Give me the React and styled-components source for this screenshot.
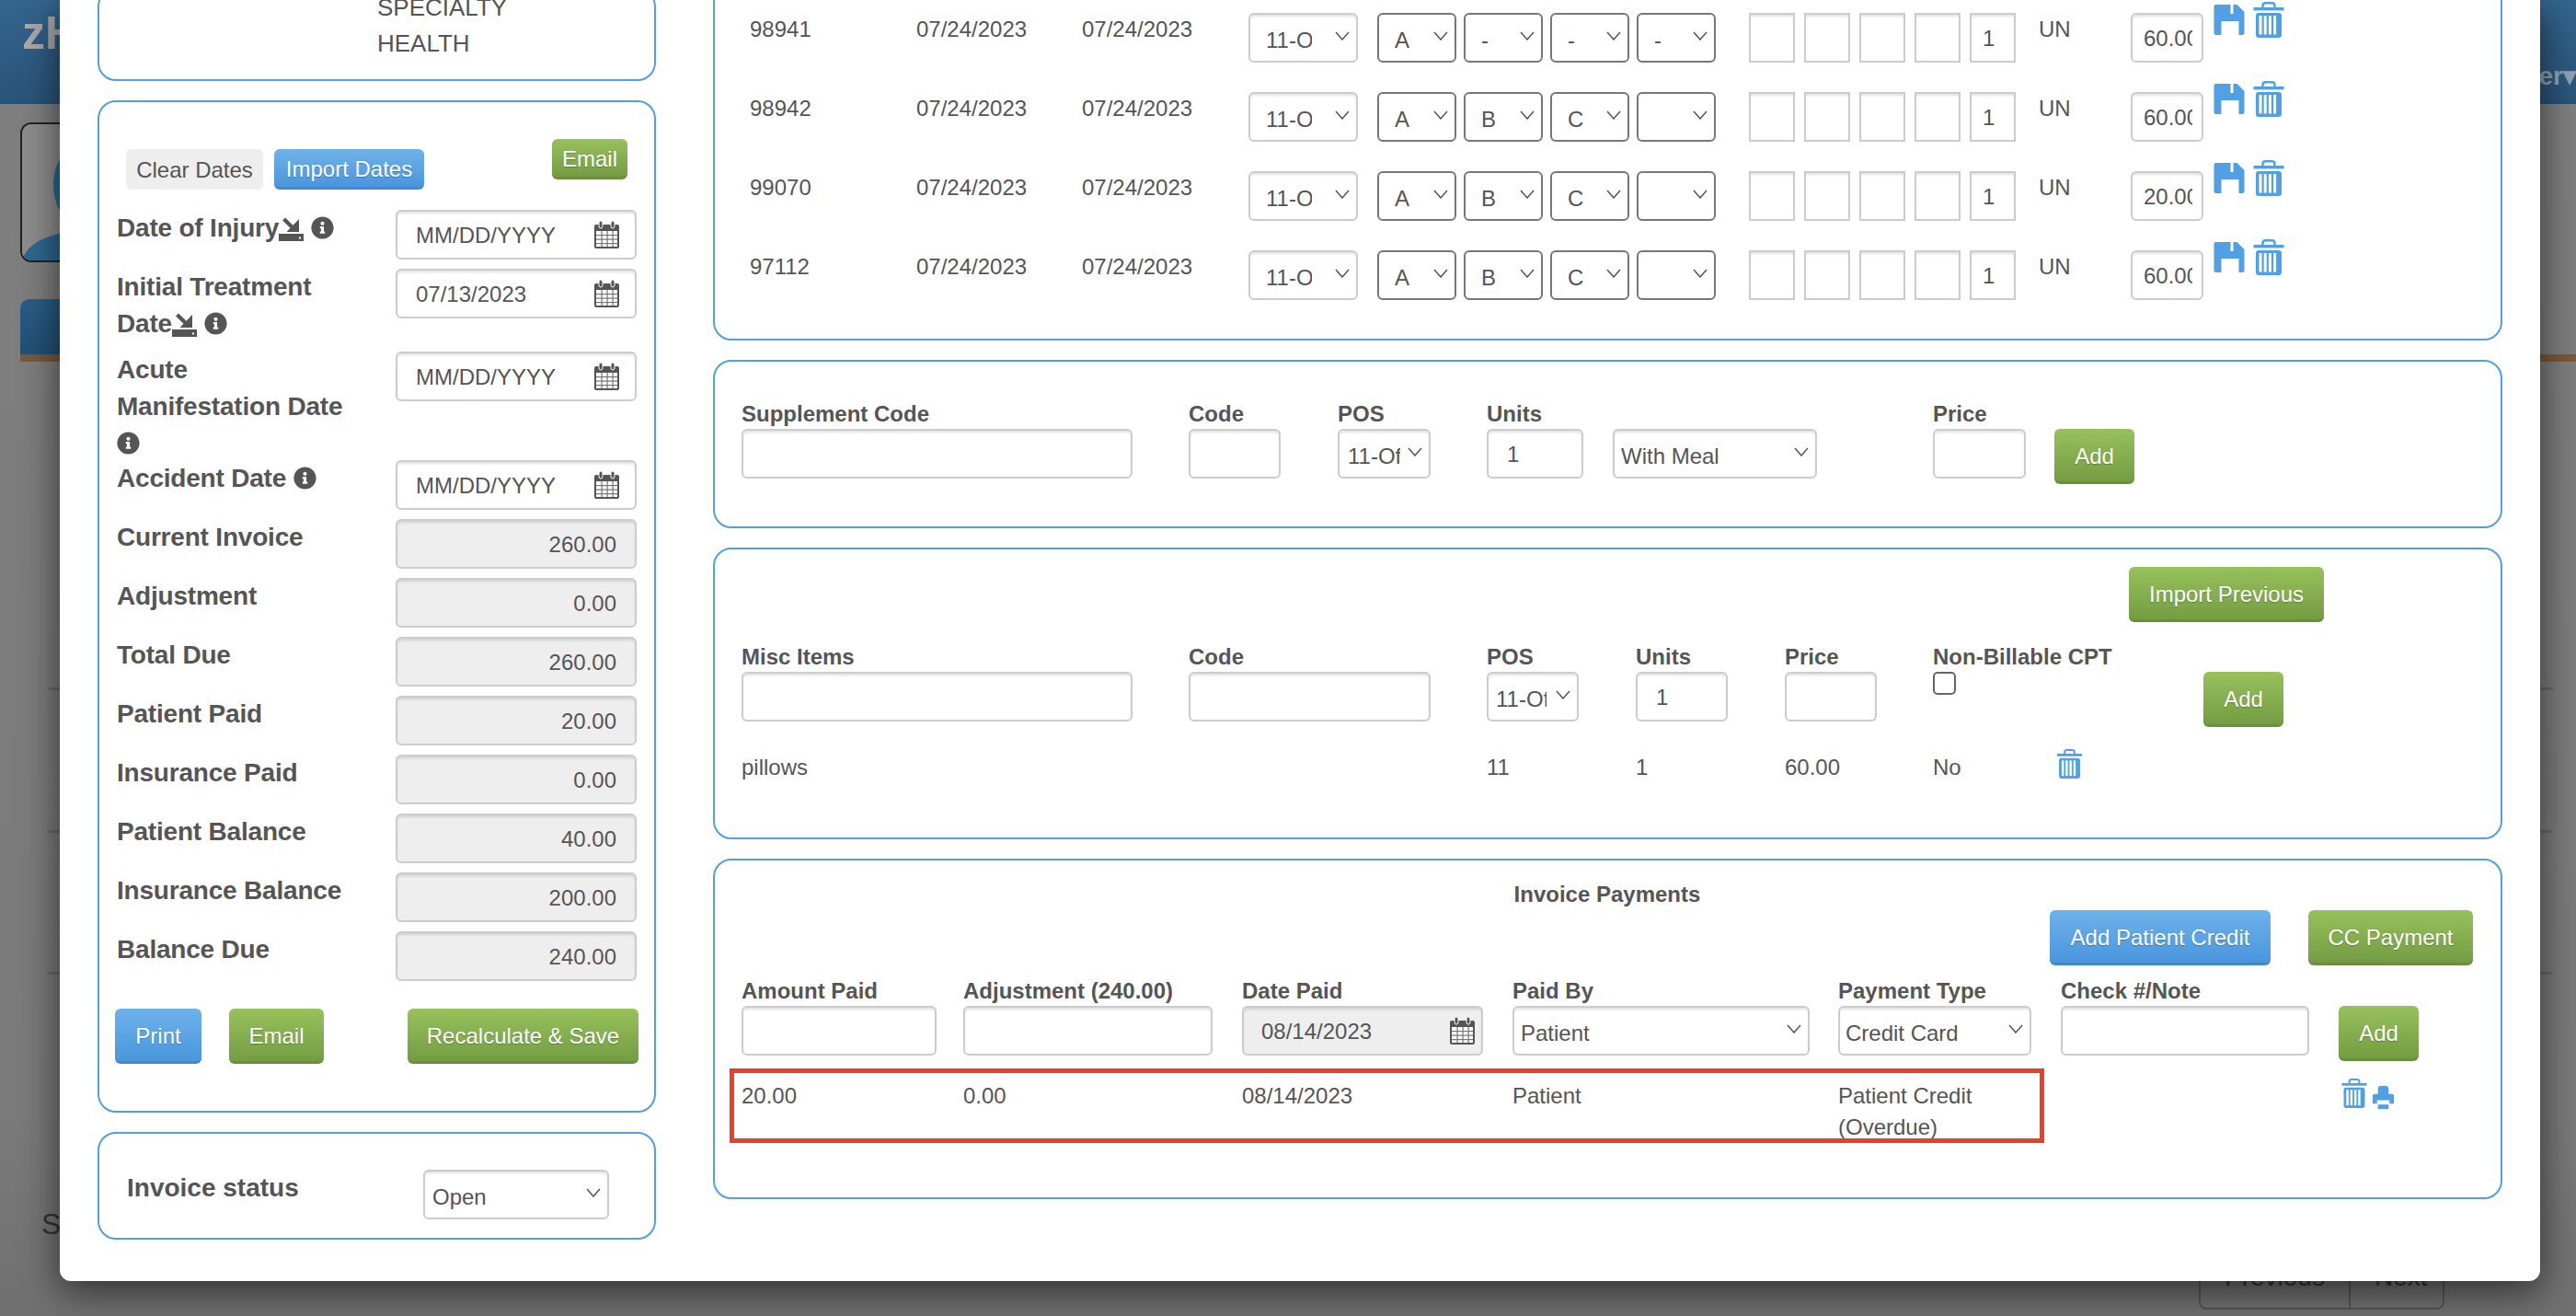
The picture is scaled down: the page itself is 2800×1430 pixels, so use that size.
import React from "react";
import styled, { createGlobalStyle } from "styled-components";
import { FaInfoCircle } from "react-icons/fa";

const Global = createGlobalStyle`
  html, body { margin: 0; padding: 0; background: #7b7b7b; }
  * { box-sizing: border-box; }
  body { font-family: "Liberation Sans", Arial, sans-serif; color: #555; }
`;

const Stage = styled.div`
  position: relative; width: 2800px; height: 1430px; overflow: hidden;
  background: linear-gradient(#7f7f7f, #7a7a7a 85%, #707070);
  display: flex; flex-direction: column;
`;
const TopBar = styled.header`
  height: 113px; flex: none; display: flex; justify-content: space-between;
  background: linear-gradient(#33658f, #2a5479); border-bottom: 2px solid #28506f;
  color: #a9a9a9; font-weight: 700;
`;
const Brand = styled.div`font-size: 50px; line-height: 72px; padding-left: 24px;`;
const UserMenu = styled.div`font-size: 28px; line-height: 166px; color: #8ea2b4;`;
const AvatarBox = styled.div`
  flex: none; width: 200px; height: 152px; margin: 20px 0 0 22px; border: 2px solid #222; border-radius: 12px;
  background: #8b8b8b; overflow: hidden;
`;
const TabBar = styled.div`
  flex: none; margin: 40px 0 0 22px; height: 68px; border-bottom: 8px solid #78593c;
`;
const Tab = styled.div`
  width: 200px; height: 60px; border-radius: 10px 10px 0 0; background: linear-gradient(#2a5d88, #224f73);
`;
const ListRows = styled.div`flex: none; margin: 354px 25px 0 52px;`;
const ListRow = styled.div`height: 154.5px; border-top: 3px solid #6a6a6a;`;
const Footer = styled.footer`
  flex: 1; display: flex; justify-content: space-between; align-items: flex-end;
  padding: 0 143px 7px 45px; color: #333; font-size: 32px;
`;
const ShowingText = styled.div`margin-bottom: 74px;`;
const Pager = styled.nav`
  display: flex; width: 267px; height: 60px; border: 2px solid #555; border-radius: 8px;
  font-size: 28px; line-height: 46px; color: #333;
`;
const PagerItem = styled.span`
  padding: 0 26px; flex: none; white-space: nowrap;
  & + & { border-left: 2px solid #555; }
`;

const Modal = styled.main`
  position: absolute; left: 65px; top: 0; width: 2696px; height: 1392px; background: #fff;
  border-radius: 0 0 12px 12px; box-shadow: 0 10px 40px rgba(0,0,0,.62);
  display: flex; gap: 62px; padding-left: 41px; overflow: hidden;
`;
const Column = styled.div`
  display: flex; flex-direction: column; justify-content: flex-end; gap: 21px; height: 100%;
  width: ${(p) => p.$w}px; flex: none; padding-bottom: ${(p) => p.$pb}px;
`;
const Card = styled.section`
  flex: none; position: relative; border: 2px solid #519fe4; border-radius: 20px; background: #fff;
  padding: ${(p) => p.$pad};
`;
const SpecialtyText = styled.div`font-size: 26px; line-height: 39px;`;

const TopActions = styled.div`display: flex; justify-content: space-between; margin-bottom: 22px; padding: 0 10px;`;
const ButtonGroup = styled.div`display: flex; gap: 12px; margin-top: 11px;`;

const Btn = styled.button`
  display: block; flex: none; font: 24px "Liberation Sans", Arial, sans-serif; color: #fff; border: 0;
  margin: 0 0 0 ${(p) => p.$ml || 0}px;
  border-radius: 6px; white-space: nowrap; padding: 2px 0 0;
  height: ${(p) => p.$h || 60}px; width: ${(p) => p.$w}px;
  text-shadow: 0 1px 1px rgba(0,0,0,.25);
  background: ${(p) => p.$tone === "green"
    ? "linear-gradient(#98c15c, #749c43)"
    : p.$tone === "blue" ? "linear-gradient(#6fb2ea, #4996dd)" : "#eee"};
  border-bottom: ${(p) => p.$tone === "green" ? "3px solid #6b8f3e" : p.$tone === "blue" ? "3px solid #4288cb" : "0"};
  ${(p) => p.$tone === "grey" ? "color:#555;text-shadow:none;" : ""}
`;

const FormRow = styled.div`display: flex; align-items: flex-start; height: ${(p) => p.$h}px;`;
const FormLabel = styled.div`width: 303px; flex: none; padding-right: 33px; font-size: 28px; line-height: 40px; font-weight: 700; letter-spacing: -.2px;`;
const PrintRow = styled.div`display: flex; margin: 20px 0 0 -2px;`;

const Field = styled.input`
  display: block; flex: none; height: ${(p) => p.$h || 54}px; width: ${(p) => p.$w}px; margin: 0;
  border: 2px solid #ccc; border-radius: ${(p) => (p.$square ? 0 : 6)}px;
  box-shadow: inset 0 3px 3px -1px rgba(0,0,0,.12);
  background: ${(p) => (p.$off ? "#eee" : "#fff")};
  font: 24px "Liberation Sans", Arial, sans-serif; color: #555; outline: 0;
  padding: 2px ${(p) => p.$pr ?? 10}px 0 ${(p) => p.$pl ?? 12}px;
  text-align: ${(p) => (p.$right ? "right" : "left")};
  &::placeholder { color: #555; opacity: 1; }
`;
const DateWrap = styled.div`position: relative; width: ${(p) => p.$w}px;`;
const CalSlot = styled.span`position: absolute; right: ${(p) => p.$r}px; top: 12px; display: block; line-height: 0;`;
const SelectWrap = styled.div`position: relative; width: ${(p) => p.$w}px;`;
const Sel = styled.select`
  appearance: none; display: block; width: 100%; height: 54px; margin: 0; background: #fff; outline: 0;
  border: 2px solid ${(p) => (p.$dark ? "#777" : "#ccc")}; border-radius: 6px;
  box-shadow: ${(p) => (p.$dark ? "none" : "inset 0 3px 3px -1px rgba(0,0,0,.12)")};
  font: 24px "Liberation Sans", Arial, sans-serif; color: #555;
  padding: 5px ${(p) => p.$pr || 31}px 0 ${(p) => p.$pl}px;
`;
const ChevSlot = styled.span`position: absolute; right: 9px; top: 20px; line-height: 0; pointer-events: none;`;

const RowGrid = styled.div`
  display: grid; grid-template-columns: ${(p) => p.$cols}; align-items: start;
  row-gap: ${(p) => p.$gap || 0}px; position: relative;
`;
const Cell = styled.div`font-size: 24px; line-height: 34px; color: #555; margin-top: ${(p) => p.$mt || 0}px;`;
const Heading = styled.div`font-size: 24px; line-height: 33px; height: 33px; font-weight: 700; white-space: nowrap; color: #555;`;
const Stack = styled.div`display: flex; flex-direction: column; align-items: flex-start;`;
const IconPair = styled.div`display: flex; align-items: flex-start; gap: ${(p) => p.$gap}px; margin: ${(p) => p.$m};`;
const SaveSlot = styled.span`display: block; margin-top: 3px; line-height: 0;`;
const PrinterSlot = styled.span`display: block; margin-top: 8px; line-height: 0;`;
const ImportRow = styled.div`display: flex; justify-content: flex-end; margin-bottom: 21px; padding-right: 192px;`;
const MiscData = styled(RowGrid)`margin-top: 27px;`;
const Check = styled.input`
  appearance: none; display: block; width: 25px; height: 25px; margin: 0; border: 2px solid #666; border-radius: 5px; background: #fff;
`;
const PaymentTitle = styled.div`font-size: 24px; line-height: 34px; font-weight: 700; text-align: center; color: #555;`;
const PaymentActions = styled.div`display: flex; justify-content: flex-end; gap: 41px; margin-bottom: 11px;`;
const PaymentData = styled(RowGrid)`margin-top: 21px;`;
const RedBox = styled.div`
  position: absolute; left: -13px; top: -13px; width: 1429px; height: 81px; border: 5px solid #e8412a; pointer-events: none;
`;
const StatusRow = styled.div`display: flex; align-items: flex-start;`;
const StatusLabel = styled.div`width: 322px; flex: none; font-size: 28px; line-height: 40px; font-weight: 700;`;
const InlineIcon = styled.span`
  display: inline-block; line-height: 0; vertical-align: ${(p) => p.$va}px; margin-left: ${(p) => p.$ml || 0}px;
`;

const BLUE = "#52a0e4";
const Chevron = () => (
  <svg width="16" height="10" viewBox="0 0 16 10"><polyline points="1,1 8,9 15,1" fill="none" stroke="#555" strokeWidth="1.5" /></svg>
);
const Calendar = ({ w = 27, h = 30 }) => (
  <svg width={w} height={h} viewBox="0 0 27 30">
    <rect x="0" y="4" width="27" height="26" rx="2" fill="#555" />
    <rect x="5" y="0" width="4" height="8" rx="2" fill="#555" stroke="#fff" strokeWidth="1" />
    <rect x="18" y="0" width="4" height="8" rx="2" fill="#555" stroke="#fff" strokeWidth="1" />
    <rect x="2" y="11" width="23" height="17" fill="#fff" />
    {[7.5, 13.5, 19.5].map((x) => <rect key={x} x={x} y="11" width="1.2" height="17" fill="#777" />)}
    {[15, 19.5, 24].map((y) => <rect key={y} x="2" y={y} width="23" height="1.2" fill="#777" />)}
  </svg>
);
const SaveIcon = () => (
  <svg width="34" height="33" viewBox="0 0 33 33">
    <path fillRule="evenodd" fill={BLUE} d="M2 0H18V10H21V0H25L33 8V31Q33 33 31 33H27V18H8V33H2Q0 33 0 31V2Q0 0 2 0Z" />
  </svg>
);
const TrashIcon = ({ w = 34, h = 39 }) => (
  <svg width={w} height={h} viewBox="0 0 33 39">
    <path d="M10 7V4Q10 1.2 13 1.2H20Q23 1.2 23 4V7" fill="none" stroke={BLUE} strokeWidth="2.4" />
    <rect x="0" y="6" width="33" height="3.4" fill={BLUE} />
    <rect x="2.5" y="12" width="28" height="27" rx="3" fill={BLUE} />
    {[6, 11.2, 16.4, 21.6].map((x) => <rect key={x} x={x} y="15" width="3" height="20.5" fill="#fff" />)}
  </svg>
);
const PrinterIcon = () => (
  <svg width="25" height="25" viewBox="0 0 24 26">
    <path fill={BLUE} d="M6 10V3Q6 0 9 0H15Q18 0 18 3V10Z" />
    <path fill={BLUE} d="M2 9H22Q24 9 24 11V20H19V16H5V20H0V11Q0 9 2 9Z" />
    <rect x="6" y="21" width="12" height="5" fill={BLUE} />
  </svg>
);
const ImportIcon = () => (
  <svg width="27" height="28" viewBox="0 0 27 28">
    <path fill="#555" fillRule="evenodd" d="M0 20H27V28H0ZM22 23.500h2v2h-2Z" />
    <path fill="#555" d="M22 4V18H8.500L12.500 13.800L4 5.500L7 2.500L15.500 10.800L22 4Z" />
  </svg>
);
const Info = ({ ml = 8 }) => (
  <InlineIcon $ml={ml} $va={-3}><FaInfoCircle size={25} color="#555" /></InlineIcon>
);
const Imp = () => <InlineIcon $va={-5}><ImportIcon /></InlineIcon>;

const Select = ({ w, pl, pr, dark, value, options }) => (
  <SelectWrap $w={w}>
    <Sel $pl={pl} $pr={pr} $dark={dark} defaultValue={value}>
      {(options || [value]).map((o) => <option key={o}>{o}</option>)}
    </Sel>
    <ChevSlot><Chevron /></ChevSlot>
  </SelectWrap>
);
const DateField = ({ w, value, off, pl = 20, r = 19 }) => (
  <DateWrap $w={w}>
    <Field $w={w} $off={off} $pl={pl} $pr={8} placeholder="MM/DD/YYYY" defaultValue={value} readOnly={off} />
    <CalSlot $r={r}><Calendar /></CalSlot>
  </DateWrap>
);

const treatments = [
  ["98941", ["A", "-", "-", "-"], "60.00"],
  ["98942", ["A", "B", "C", ""], "60.00"],
  ["99070", ["A", "B", "C", ""], "20.00"],
  ["97112", ["A", "B", "C", ""], "60.00"],
];
const balances = [
  ["Current Invoice", "260.00"], ["Adjustment", "0.00"], ["Total Due", "260.00"], ["Patient Paid", "20.00"],
  ["Insurance Paid", "0.00"], ["Patient Balance", "40.00"], ["Insurance Balance", "200.00"], ["Balance Due", "240.00"],
];
const TX_COLS = "181px 180px 181px 140px 94px 94px 94px 122px 60px 60px 60px 60px 75px 100px 90px 90px";
const SUP_COLS = "486px 162px 162px 137px 348px 132px 100px";
const MISC_COLS = "486px 324px 162px 162px 161px 294px 100px";
const PAY_COLS = "241px 303px 294px 354px 242px 302px 120px";

const Avatar = () => (
  <svg width="196" height="148" viewBox="0 0 196 148">
    <rect width="196" height="148" fill="#8d8d8d" />
    <ellipse cx="78" cy="66" rx="44" ry="52" fill="#2f6791" />
    <path d="M0 148Q6 126 44 118L120 118L160 148Z" fill="#2f6791" />
  </svg>
);

export default function App() {
  return (
    <Stage>
      <Global />
      <TopBar>
        <Brand>zHealth</Brand>
        <UserMenu>User▾</UserMenu>
      </TopBar>
      <AvatarBox><Avatar /></AvatarBox>
      <TabBar><Tab /></TabBar>
      <ListRows><ListRow /><ListRow /><ListRow /></ListRows>
      <Footer>
        <ShowingText>Showing</ShowingText>
        <Pager>
          <PagerItem>Previous</PagerItem>
          <PagerItem>Next</PagerItem>
        </Pager>
      </Footer>

      <Modal>
        <Column $w={607} $pb={45}>
          <Card $pad="0 19px 19px 302px">
            <SpecialtyText>SPECIALTY<br />HEALTH</SpecialtyText>
          </Card>
          <Card $pad="40px 19px 51px 19px">
            <TopActions>
              <ButtonGroup>
                <Btn $tone="grey" $h={44} $w={149}>Clear Dates</Btn>
                <Btn $tone="blue" $h={44} $w={163}>Import Dates</Btn>
              </ButtonGroup>
              <Btn $tone="green" $h={44} $w={82}>Email</Btn>
            </TopActions>
            <FormRow $h={64}>
              <FormLabel>Date of Injury<Imp /><Info /></FormLabel>
              <DateField w={262} />
            </FormRow>
            <FormRow $h={90}>
              <FormLabel>Initial Treatment Date<Imp /><Info /></FormLabel>
              <DateField w={262} value="07/13/2023" />
            </FormRow>
            <FormRow $h={118}>
              <FormLabel>Acute<br />Manifestation Date<br /><Info ml={0} /></FormLabel>
              <DateField w={262} />
            </FormRow>
            <FormRow $h={64}>
              <FormLabel>Accident Date<Info /></FormLabel>
              <DateField w={262} />
            </FormRow>
            {balances.map(([l, v]) => (
              <FormRow $h={64} key={l}>
                <FormLabel>{l}</FormLabel>
                <Field $w={262} $off $right $pr={20} readOnly defaultValue={v} />
              </FormRow>
            ))}
            <PrintRow>
              <Btn $tone="blue" $w={94}>Print</Btn>
              <Btn $tone="green" $w={103} $ml={30}>Email</Btn>
              <Btn $tone="green" $w={251} $ml={91}>Recalculate &amp; Save</Btn>
            </PrintRow>
          </Card>
          <Card $pad="39px 30px 20px 30px">
            <StatusRow>
              <StatusLabel>Invoice status</StatusLabel>
              <Select w={202} pl={8} value="Open" options={["Open", "Closed"]} />
            </StatusRow>
          </Card>
        </Column>

        <Column $w={1945} $pb={89}>
          <Card $pad="40px 0 42px 38px">
            <RowGrid $cols={TX_COLS} $gap={32}>
              {treatments.map(([code, dx, price]) => (
                <React.Fragment key={code}>
                  <Cell $mt={1}>{code}</Cell>
                  <Cell $mt={1}>07/24/2023</Cell>
                  <Cell $mt={1}>07/24/2023</Cell>
                  <Select w={119} pl={17} pr={48} value="11-Office" />
                  {dx.map((d, i) => <Select key={i} w={86} pl={17} dark value={d} />)}
                  {[0, 1, 2, 3].map((i) => <Field key={i} $w={50} $square />)}
                  <Field $w={50} $square defaultValue="1" />
                  <Cell $mt={1}>UN</Cell>
                  <Field $w={79} defaultValue={price} />
                  <IconPair $gap={9} $m="-12px 0 0 0">
                    <SaveSlot><SaveIcon /></SaveSlot>
                    <TrashIcon />
                  </IconPair>
                </React.Fragment>
              ))}
            </RowGrid>
          </Card>

          <Card $pad="40px 0 46px 29px">
            <RowGrid $cols={SUP_COLS}>
              <Stack><Heading>Supplement Code</Heading><Field $w={425} /></Stack>
              <Stack><Heading>Code</Heading><Field $w={100} /></Stack>
              <Stack><Heading>POS</Heading><Select w={101} pl={9} value="11-Office" /></Stack>
              <Stack><Heading>Units</Heading><Field $w={105} $pl={20} defaultValue="1" /></Stack>
              <Stack><Heading /><Select w={222} pl={7} value="With Meal" /></Stack>
              <Stack><Heading>Price</Heading><Field $w={101} /></Stack>
              <Stack><Heading /><Btn $tone="green" $w={87}>Add</Btn></Stack>
            </RowGrid>
          </Card>

          <Card $pad="19px 0 59px 29px">
            <ImportRow><Btn $tone="green" $w={212}>Import Previous</Btn></ImportRow>
            <RowGrid $cols={MISC_COLS}>
              <Stack><Heading>Misc Items</Heading><Field $w={425} /></Stack>
              <Stack><Heading>Code</Heading><Field $w={263} /></Stack>
              <Stack><Heading>POS</Heading><Select w={100} pl={8} pr={33} value="11-Office" /></Stack>
              <Stack><Heading>Units</Heading><Field $w={100} $pl={20} defaultValue="1" /></Stack>
              <Stack><Heading>Price</Heading><Field $w={100} /></Stack>
              <Stack><Heading>Non-Billable CPT</Heading><Check type="checkbox" /></Stack>
              <Stack><Heading /><Btn $tone="green" $w={87}>Add</Btn></Stack>
            </RowGrid>
            <MiscData $cols={MISC_COLS}>
              <Cell>pillows</Cell>
              <Cell />
              <Cell>11</Cell>
              <Cell>1</Cell>
              <Cell>60.00</Cell>
              <Cell>No</Cell>
              <IconPair $gap={0} $m="-3px 0 0 -159px"><TrashIcon w={27} h={32} /></IconPair>
            </MiscData>
          </Card>

          <Card $pad="20px 30px 59px 29px">
            <PaymentTitle>Invoice Payments</PaymentTitle>
            <PaymentActions>
              <Btn $tone="blue" $w={240}>Add Patient Credit</Btn>
              <Btn $tone="green" $w={179}>CC Payment</Btn>
            </PaymentActions>
            <RowGrid $cols={PAY_COLS}>
              <Stack><Heading>Amount Paid</Heading><Field $w={212} /></Stack>
              <Stack><Heading>Adjustment (240.00)</Heading><Field $w={271} /></Stack>
              <Stack><Heading>Date Paid</Heading><DateField w={262} off value="08/14/2023" pl={19} r={9} /></Stack>
              <Stack><Heading>Paid By</Heading><Select w={323} pl={7} value="Patient" /></Stack>
              <Stack><Heading>Payment Type</Heading><Select w={210} pl={6} value="Credit Card" /></Stack>
              <Stack><Heading>Check #/Note</Heading><Field $w={270} /></Stack>
              <Stack><Heading /><Btn $tone="green" $w={87}>Add</Btn></Stack>
            </RowGrid>
            <PaymentData $cols={PAY_COLS}>
              <RedBox />
              <Cell>20.00</Cell>
              <Cell>0.00</Cell>
              <Cell>08/14/2023</Cell>
              <Cell>Patient</Cell>
              <Cell>Patient Credit (Overdue)</Cell>
              <Cell />
              <IconPair $gap={5} $m="-2px 0 0 3px">
                <TrashIcon w={28} h={32} />
                <PrinterSlot><PrinterIcon /></PrinterSlot>
              </IconPair>
            </PaymentData>
          </Card>
        </Column>
      </Modal>
    </Stage>
  );
}
